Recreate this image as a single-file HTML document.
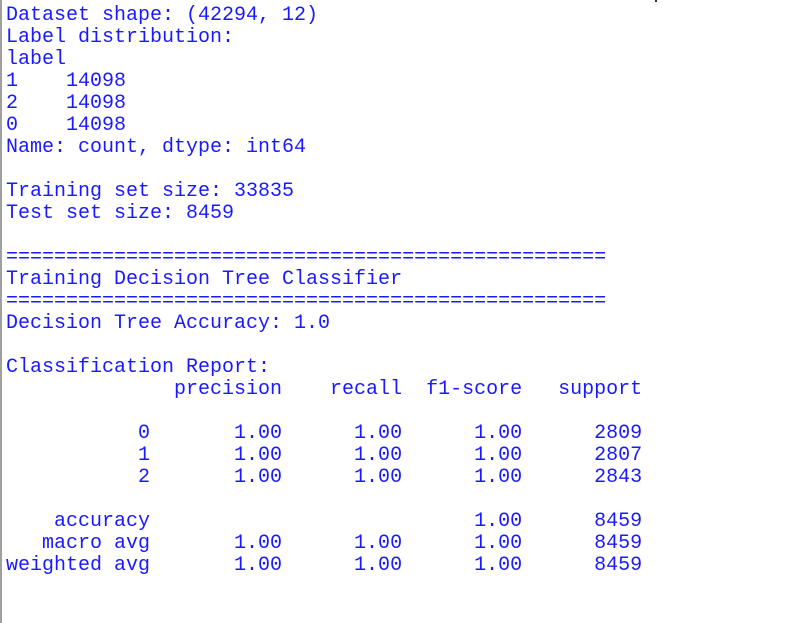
<!DOCTYPE html>
<html><head><style>
html,body{margin:0;padding:0;background:#fff;width:806px;height:623px;overflow:hidden}
.b{position:absolute;left:0;top:0;width:2px;height:623px;background:#a0a0a0}
pre{position:absolute;left:6px;top:5px;margin:0;font-family:"Liberation Mono",monospace;font-size:20px;line-height:22px;color:#1a1aff}
.t{position:absolute;left:655px;top:0;width:2px;height:2px;background:#333}
</style></head><body>
<div class="b"></div><div class="t"></div>
<pre>Dataset shape: (42294, 12)
Label distribution:
label
1    14098
2    14098
0    14098
Name: count, dtype: int64

Training set size: 33835
Test set size: 8459

==================================================
Training Decision Tree Classifier
==================================================
Decision Tree Accuracy: 1.0

Classification Report:
              precision    recall  f1-score   support

           0       1.00      1.00      1.00      2809
           1       1.00      1.00      1.00      2807
           2       1.00      1.00      1.00      2843

    accuracy                           1.00      8459
   macro avg       1.00      1.00      1.00      8459
weighted avg       1.00      1.00      1.00      8459
</pre>
</body></html>
